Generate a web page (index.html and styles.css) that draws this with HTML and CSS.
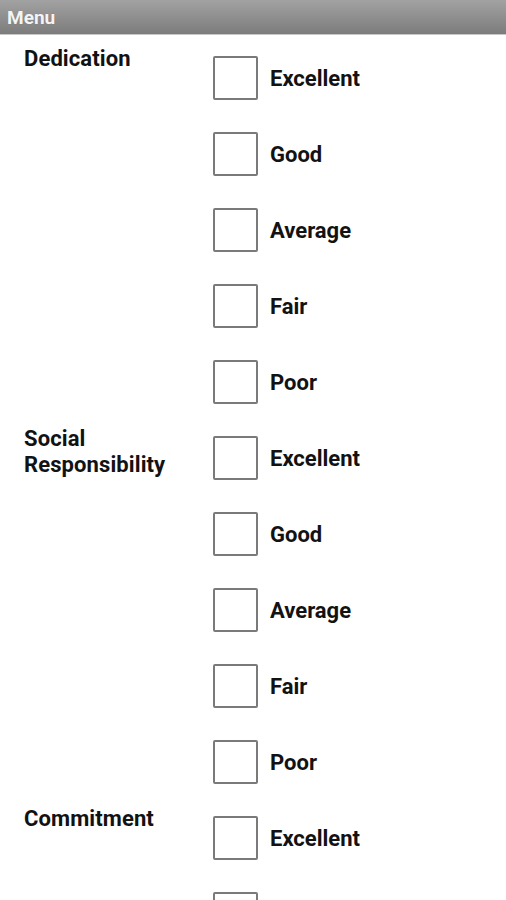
FILE: index.html
```html
<!DOCTYPE html>
<html>
<head>
<meta charset="utf-8">
<link rel="stylesheet" href="styles.css">
</head>
<body>
<header class="bar"><span class="bar-title">Menu</span></header>
<main class="form">
  <section class="group">
    <div class="group-label">Dedication</div>
    <div class="options">
      <label class="opt"><span class="box"></span><span class="opt-text">Excellent</span></label>
      <label class="opt"><span class="box"></span><span class="opt-text">Good</span></label>
      <label class="opt"><span class="box"></span><span class="opt-text">Average</span></label>
      <label class="opt"><span class="box"></span><span class="opt-text">Fair</span></label>
      <label class="opt"><span class="box"></span><span class="opt-text">Poor</span></label>
    </div>
  </section>
  <section class="group">
    <div class="group-label">Social<br>Responsibility</div>
    <div class="options">
      <label class="opt"><span class="box"></span><span class="opt-text">Excellent</span></label>
      <label class="opt"><span class="box"></span><span class="opt-text">Good</span></label>
      <label class="opt"><span class="box"></span><span class="opt-text">Average</span></label>
      <label class="opt"><span class="box"></span><span class="opt-text">Fair</span></label>
      <label class="opt"><span class="box"></span><span class="opt-text">Poor</span></label>
    </div>
  </section>
  <section class="group">
    <div class="group-label">Commitment</div>
    <div class="options">
      <label class="opt"><span class="box"></span><span class="opt-text">Excellent</span></label>
      <label class="opt"><span class="box"></span><span class="opt-text">Good</span></label>
      <label class="opt"><span class="box"></span><span class="opt-text">Average</span></label>
      <label class="opt"><span class="box"></span><span class="opt-text">Fair</span></label>
      <label class="opt"><span class="box"></span><span class="opt-text">Poor</span></label>
    </div>
  </section>
</main>
</body>
</html>
```
FILE: styles.css
```css
html {
  overflow: hidden;
}
body {
  margin: 0;
  background: #ffffff;
  font-family: Roboto, "Liberation Sans", sans-serif;
  color: #121212;
}
.bar {
  height: 34px;
  background: linear-gradient(#a2a2a2, #7c7c7c);
  border-bottom: 1px solid #c8c8c8;
  display: flex;
  align-items: center;
  padding-left: 7px;
}
.bar-title {
  color: #f4f4f4;
  font-weight: bold;
  font-size: 19px;
  text-shadow: 0 0 1px rgba(0,0,0,0.2);
}
.group {
  display: flex;
}
.group-label {
  width: 189px;
  padding-left: 24px;
  margin-top: 11px;
  font-size: 22px;
  font-weight: bold;
  line-height: 26px;
  letter-spacing: 0.1px;
}
.options {
  display: flex;
  flex-direction: column;
}
.opt {
  display: flex;
  align-items: center;
  padding-top: 21px;
  padding-bottom: 11px;
}
.box {
  width: 41px;
  height: 40px;
  border: 2px solid #7a7a7a;
  border-radius: 2px;
  flex: none;
}
.opt-text {
  margin-left: 12px;
  font-size: 22px;
  font-weight: bold;
}
```
